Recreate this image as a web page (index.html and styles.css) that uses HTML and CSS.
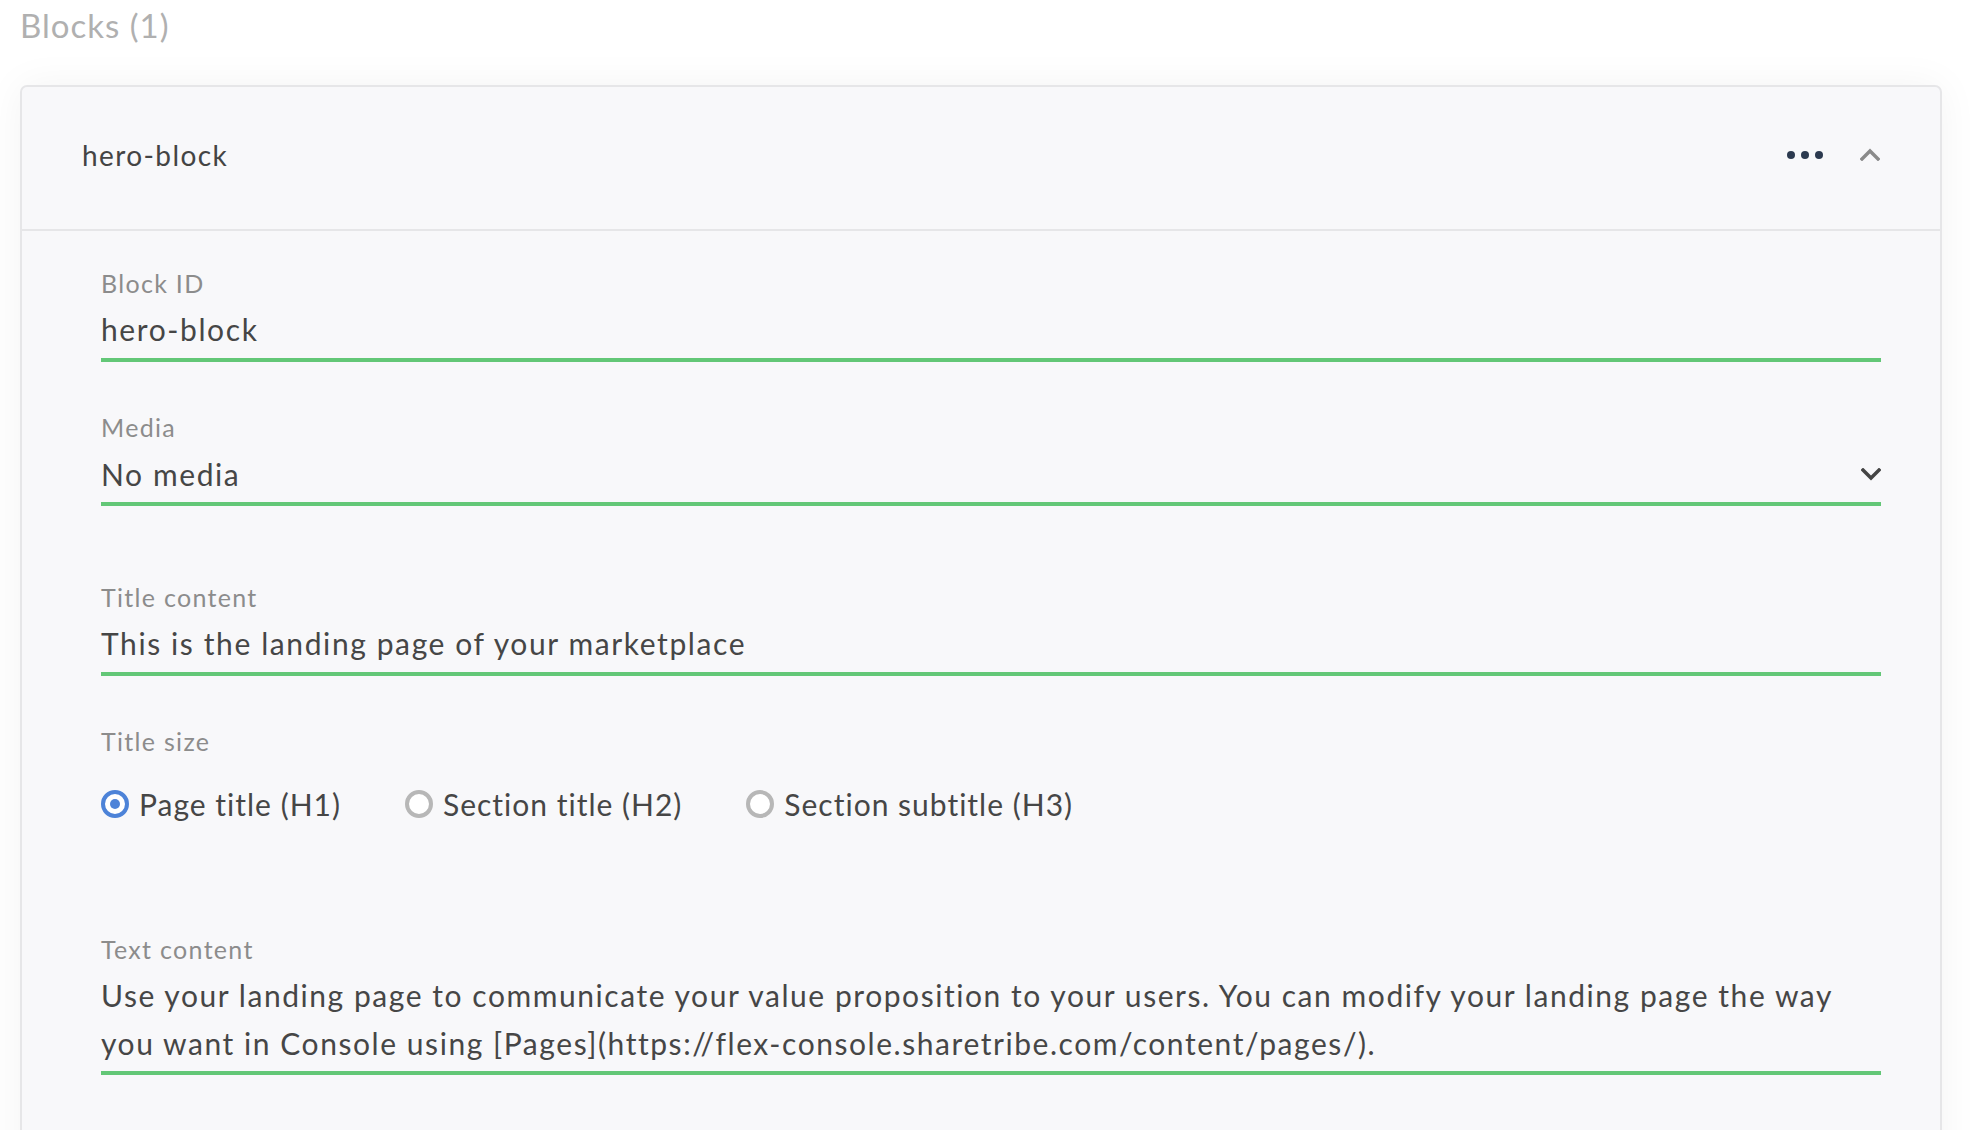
FILE: index.html
```html
<!DOCTYPE html>
<html lang="en">
<head>
<meta charset="utf-8">
<title>Blocks</title>
<link rel="stylesheet" href="styles.css">
</head>
<body>
<div class="page">
  <h2 class="section-title">Blocks (1)</h2>
  <div class="card">
    <div class="card-header">
      <span class="block-name">hero-block</span>
      <div class="header-actions">
        <span class="dots"><i></i><i></i><i></i></span>
        <svg class="chevron-up" width="20" height="13" viewBox="0 0 20 13"><path d="M2 11 L10 3 L18 11" fill="none" stroke="#8a8a8a" stroke-width="3.4" stroke-linecap="square"/></svg>
      </div>
    </div>
    <div class="card-body">
      <div class="field">
        <div class="label">Block ID</div>
        <div class="value">hero-block</div>
      </div>
      <div class="field field-media">
        <div class="label">Media</div>
        <div class="value select">
          <span>No media</span>
          <svg class="chevron-down" width="20" height="13" viewBox="0 0 20 13"><path d="M2 2 L10 10 L18 2" fill="none" stroke="#444" stroke-width="3.4" stroke-linecap="square"/></svg>
        </div>
      </div>
      <div class="field field-title">
        <div class="label">Title content</div>
        <div class="value">This is the landing page of your marketplace</div>
      </div>
      <div class="field-radios">
        <div class="label">Title size</div>
        <div class="radios">
          <label class="radio"><span class="dot checked"></span>Page title (H1)</label>
          <label class="radio"><span class="dot"></span>Section title (H2)</label>
          <label class="radio"><span class="dot"></span>Section subtitle (H3)</label>
        </div>
      </div>
      <div class="field field-text">
        <div class="label">Text content</div>
        <div class="value multiline">Use your landing page to communicate your value proposition to your users. You can modify your landing page the way<br>you want in Console using [Pages](https://flex-console.sharetribe.com/content/pages/).</div>
      </div>
    </div>
  </div>
</div>
</body>
</html>
```
FILE: styles.css
```css
html, body {
  margin: 0;
  padding: 0;
  background: #ffffff;
  font-family: "Lato", "Noto Sans", sans-serif;
}

.page {
  padding: 5px 28px 0 20px;
  height: 1130px;
  overflow: hidden;
  box-sizing: border-box;
}

.section-title {
  margin: 0;
  font-size: 33px;
  line-height: 40px;
  font-weight: 400;
  letter-spacing: 1px;
  color: #b0b0b0;
}

.card {
  margin-top: 40px;
  border: 2px solid #e6e6e8;
  border-radius: 7px;
  background: #f8f8fa;
  box-shadow: 0 0 40px rgba(0, 0, 0, 0.05);
  min-height: 1100px;
}

.card-header {
  height: 144px;
  box-sizing: border-box;
  display: flex;
  align-items: center;
  justify-content: space-between;
  padding: 0 60px 7px 60px;
  border-bottom: 2px solid #e6e6e8;
}

.block-name {
  font-size: 28px;
  letter-spacing: 1.4px;
  color: #444444;
}

.header-actions {
  display: flex;
  align-items: center;
  gap: 37px;
}

.dots {
  display: flex;
  gap: 6px;
}

.dots i {
  width: 8px;
  height: 8px;
  border-radius: 50%;
  background: #2c3a4f;
}

.card-body {
  padding: 37px 59px 0 79px;
}

.label {
  font-size: 25px;
  line-height: 30px;
  letter-spacing: 1.3px;
  color: #8c8c8c;
}

.value {
  margin-top: 11px;
  font-size: 30px;
  line-height: 40px;
  letter-spacing: 1.6px;
  color: #464646;
  padding-bottom: 9px;
  border-bottom: 4px solid #63c777;
}

.field-media {
  margin-top: 50px;
}

.field-media .value {
  margin-top: 12px;
  padding-bottom: 8px;
}

.select {
  display: flex;
  align-items: center;
  justify-content: space-between;
}

.field-title {
  margin-top: 76px;
}

.field-radios {
  margin-top: 50px;
}

.radios {
  margin-top: 28px;
  height: 40px;
  display: flex;
  align-items: center;
  gap: 64px;
}

.radio {
  display: flex;
  align-items: center;
  gap: 10px;
  font-size: 30px;
  line-height: 40px;
  letter-spacing: 1px;
  color: #464646;
}

.dot {
  width: 28px;
  height: 28px;
  box-sizing: border-box;
  border-radius: 50%;
  border: 4px solid #b7b7b7;
  background: #ffffff;
  position: relative;
}

.dot.checked {
  border: 4px solid #4d83d8;
}

.dot.checked::after {
  content: "";
  position: absolute;
  left: 50%;
  top: 50%;
  width: 10px;
  height: 10px;
  margin: -5px 0 0 -5px;
  border-radius: 50%;
  background: #4d83d8;
}

.field-text {
  margin-top: 110px;
}

.multiline {
  margin-top: 7px;
  line-height: 48px;
  padding-bottom: 4px;
  letter-spacing: 1.55px;
}
```
